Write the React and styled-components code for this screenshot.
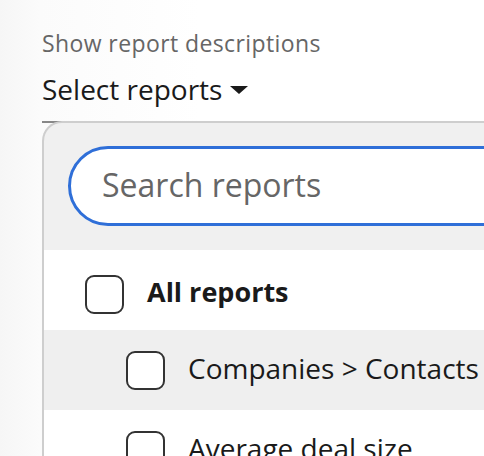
import styled, { createGlobalStyle } from "styled-components";

const GlobalStyle = createGlobalStyle`
  html, body {
    margin: 0;
    padding: 0;
    overflow: hidden;
  }
  body {
    background: linear-gradient(90deg, #f6f6f6 0px, #fbfbfb 40px, #ffffff 200px);
    font-family: "Open Sans", Lato, sans-serif;
    min-height: 456px;
  }
`;

const Page = styled.div`
  padding: 29px 0 0 42px;
`;

const Caption = styled.p`
  margin: 0;
  color: rgb(102, 102, 102);
  font-size: 23px;
  line-height: 28px;
  letter-spacing: 0.4px;
`;

const SelectButton = styled.button`
  display: flex;
  align-items: center;
  gap: 8px;
  width: 240px;
  margin: 11px 0 0;
  padding: 4px 0 15px;
  border: none;
  border-bottom: 2px solid rgb(136, 136, 136);
  background: transparent;
  color: rgb(26, 26, 26);
  font-family: inherit;
  font-size: 28px;
  line-height: 34px;
  cursor: pointer;
`;

const Caret = styled.span`
  width: 0;
  height: 0;
  margin-top: 2px;
  border-left: 9.5px solid transparent;
  border-right: 9.5px solid transparent;
  border-top: 8px solid rgb(26, 26, 26);
`;

const Panel = styled.div`
  width: 500px;
  margin-top: -2px;
  border: 2px solid rgb(206, 206, 206);
  border-bottom: none;
  border-radius: 20px 20px 0 0;
  background: rgb(240, 240, 240);
  overflow: hidden;
`;

const SearchBar = styled.div`
  padding: 23px 0 24px 24px;
`;

const SearchInput = styled.input`
  box-sizing: border-box;
  width: 100%;
  height: 80px;
  padding: 0 0 3px 31px;
  border: 3.5px solid rgb(47, 111, 216);
  border-radius: 40px;
  outline: none;
  background: #fff;
  color: rgb(26, 26, 26);
  font-family: inherit;
  font-size: 32px;

  &::placeholder {
    color: rgb(102, 102, 102);
  }
`;

const List = styled.ul`
  margin: 0;
  padding: 8px 0 0;
  list-style: none;
  background: #fff;
`;

const Row = styled.li`
  display: flex;
  align-items: center;
  gap: 23px;
  height: ${(p) => (p.$top ? 72 : 80)}px;
  padding-left: ${(p) => 41 * (p.$level + 1)}px;
  background: ${(p) => (p.$hover ? "rgb(239, 239, 239)" : "#fff")};
`;

const Box = styled.span`
  box-sizing: border-box;
  flex: none;
  width: 39px;
  height: 39px;
  border: 2px solid rgb(51, 51, 51);
  border-radius: 9px;
  background: #fff;
`;

const Label = styled.span`
  margin-bottom: 5px;
  color: rgb(26, 26, 26);
  font-size: ${(p) => (p.$bold ? 27 : 28)}px;
  font-weight: ${(p) => (p.$bold ? 700 : 400)};
  white-space: nowrap;
`;

const reports = [
  { name: "All reports", level: 0, bold: true, top: true },
  { name: "Companies > Contacts", level: 1, hover: true },
  { name: "Average deal size", level: 1 },
];

export default function App() {
  return (
    <>
      <GlobalStyle />
      <Page>
        <Caption>Show report descriptions</Caption>
        <SelectButton>
          Select reports
          <Caret />
        </SelectButton>
        <Panel>
          <SearchBar>
            <SearchInput placeholder="Search reports" />
          </SearchBar>
          <List>
            {reports.map((r) => (
              <Row key={r.name} $level={r.level} $hover={r.hover} $top={r.top}>
                <Box />
                <Label $bold={r.bold}>{r.name}</Label>
              </Row>
            ))}
          </List>
        </Panel>
      </Page>
    </>
  );
}
